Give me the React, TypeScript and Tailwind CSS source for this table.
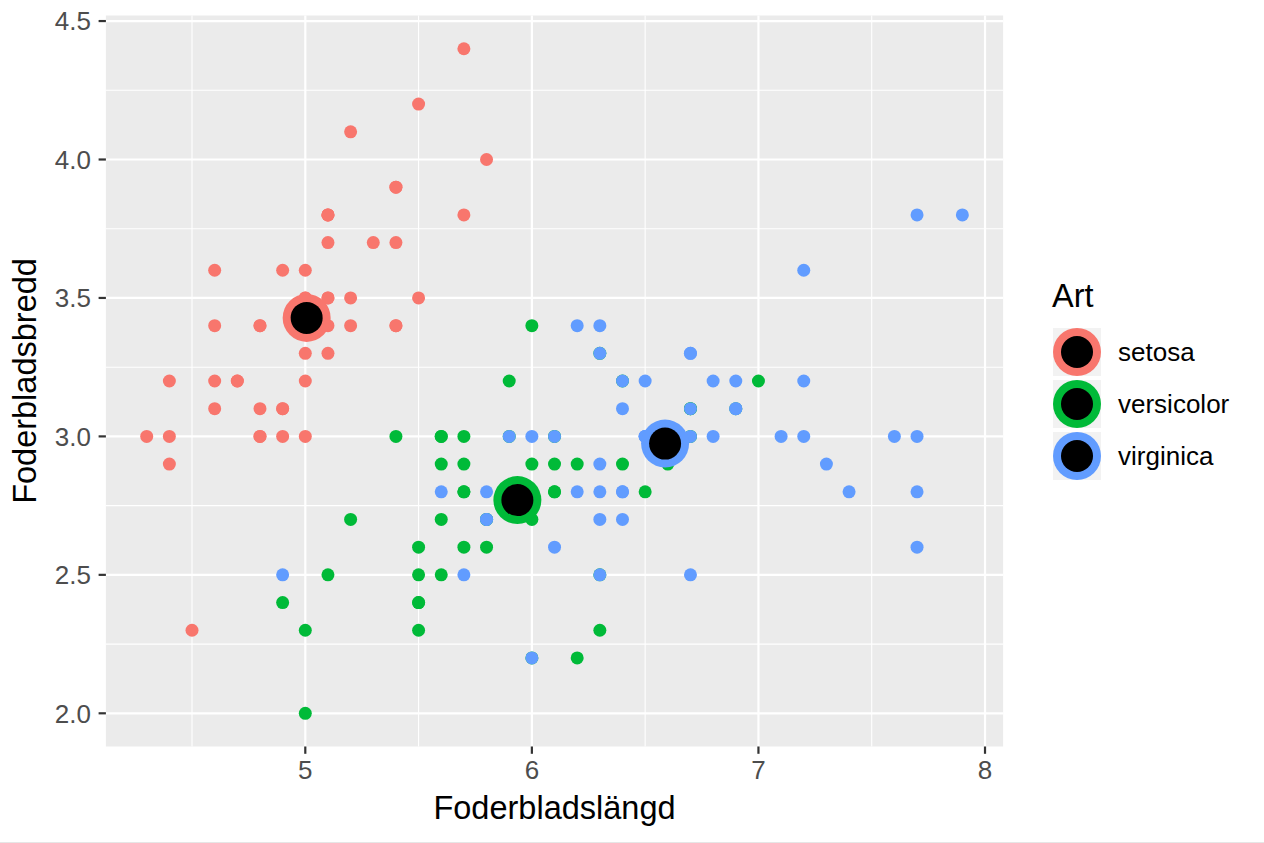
import React from "react";

const SETOSA =
  "5.1,3.5 4.9,3.0 4.7,3.2 4.6,3.1 5.0,3.6 5.4,3.9 4.6,3.4 5.0,3.4 4.4,2.9 4.9,3.1 5.4,3.7 4.8,3.4 4.8,3.0 4.3,3.0 5.8,4.0 5.7,4.4 5.4,3.9 5.1,3.5 5.7,3.8 5.1,3.8 5.4,3.4 5.1,3.7 4.6,3.6 5.1,3.3 4.8,3.4 5.0,3.0 5.0,3.4 5.2,3.5 5.2,3.4 4.7,3.2 4.8,3.1 5.4,3.4 5.2,4.1 5.5,4.2 4.9,3.1 5.0,3.2 5.5,3.5 4.9,3.6 4.4,3.0 5.1,3.4 5.0,3.5 4.5,2.3 4.4,3.2 5.0,3.5 5.1,3.8 4.8,3.0 5.1,3.8 4.6,3.2 5.3,3.7 5.0,3.3";
const VERSICOLOR =
  "7.0,3.2 6.4,3.2 6.9,3.1 5.5,2.3 6.5,2.8 5.7,2.8 6.3,3.3 4.9,2.4 6.6,2.9 5.2,2.7 5.0,2.0 5.9,3.0 6.0,2.2 6.1,2.9 5.6,2.9 6.7,3.1 5.6,3.0 5.8,2.7 6.2,2.2 5.6,2.5 5.9,3.2 6.1,2.8 6.3,2.5 6.1,2.8 6.4,2.9 6.6,3.0 6.7,3.0 6.0,2.9 5.7,2.6 5.5,2.4 5.5,2.4 5.8,2.7 6.0,2.7 5.4,3.0 6.0,3.4 6.7,3.1 6.3,2.3 5.6,3.0 5.5,2.5 5.5,2.6 6.1,3.0 5.8,2.6 5.0,2.3 5.6,2.7 5.7,3.0 5.7,2.9 6.2,2.9 5.1,2.5 5.7,2.8";
const VIRGINICA =
  "6.3,3.3 5.8,2.7 7.1,3.0 6.3,2.9 6.5,3.0 7.6,3.0 4.9,2.5 7.3,2.9 6.7,2.5 7.2,3.6 6.5,3.2 6.4,2.7 6.8,3.0 5.7,2.5 5.8,2.8 6.4,3.2 6.5,3.0 7.7,3.8 7.7,2.6 6.0,2.2 6.9,3.2 5.6,2.8 7.7,2.8 6.3,2.7 6.7,3.3 7.2,3.2 6.2,2.8 6.1,3.0 6.4,2.8 7.2,3.0 7.4,2.8 7.9,3.8 6.4,2.8 6.3,2.8 6.1,2.6 7.7,3.0 6.3,3.4 6.4,3.1 6.0,3.0 6.9,3.1 6.7,3.1 6.9,3.1 5.8,2.7 6.8,3.2 6.7,3.3 6.7,3.0 6.3,2.5 6.5,3.0 6.2,3.4 5.9,3.0";

const parse = (s: string) =>
  s.split(" ").map((p) => {
    const [a, b] = p.split(",").map(Number);
    return [a, b] as [number, number];
  });

const SPECIES = [
  { name: "setosa", color: "#F8766D", data: parse(SETOSA), mean: [5.006, 3.428] },
  { name: "versicolor", color: "#00BA38", data: parse(VERSICOLOR), mean: [5.936, 2.77] },
  { name: "virginica", color: "#619CFF", data: parse(VIRGINICA), mean: [6.588, 2.974] },
];

const X = (v: number) => 305.3 + (v - 5) * 226.57;
const Y = (v: number) => 713.3 - (v - 2) * 276.9;

const PX0 = 105.9;
const PX1 = 1003.1;
const PY0 = 15.5;
const PY1 = 746.5;

const FONT = '"Liberation Sans", Arial, Helvetica, sans-serif';

function Plot() {
  const xMajor = [5, 6, 7, 8];
  const xMinor = [4.5, 5.5, 6.5, 7.5];
  const yMajor = [2.0, 2.5, 3.0, 3.5, 4.0, 4.5];
  const yMinor = [2.25, 2.75, 3.25, 3.75, 4.25];
  return (
    <svg width={1030} height={843} className="shrink-0 block" style={{ fontFamily: FONT }}>
      <rect x={PX0} y={PY0} width={PX1 - PX0} height={PY1 - PY0} fill="#EBEBEB" />
      {xMinor.map((v) => (
        <line key={"xm" + v} x1={X(v)} x2={X(v)} y1={PY0} y2={PY1} stroke="#FFFFFF" strokeWidth={1.1} />
      ))}
      {yMinor.map((v) => (
        <line key={"ym" + v} x1={PX0} x2={PX1} y1={Y(v)} y2={Y(v)} stroke="#FFFFFF" strokeWidth={1.1} />
      ))}
      {xMajor.map((v) => (
        <line key={"xM" + v} x1={X(v)} x2={X(v)} y1={PY0} y2={PY1} stroke="#FFFFFF" strokeWidth={2.2} />
      ))}
      {yMajor.map((v) => (
        <line key={"yM" + v} x1={PX0} x2={PX1} y1={Y(v)} y2={Y(v)} stroke="#FFFFFF" strokeWidth={2.2} />
      ))}
      {SPECIES.map((s) =>
        s.data.map(([a, b], i) => (
          <circle key={s.name + i} cx={X(a)} cy={Y(b)} r={6.5} fill={s.color} />
        ))
      )}
      {SPECIES.map((s) => (
        <g key={"c" + s.name}>
          <circle cx={X(s.mean[0])} cy={Y(s.mean[1])} r={24} fill={s.color} />
          <circle cx={X(s.mean[0])} cy={Y(s.mean[1])} r={16} fill="#000000" />
        </g>
      ))}
      {yMajor.map((v) => (
        <g key={"yt" + v}>
          <line x1={PX0 - 7.3} x2={PX0} y1={Y(v)} y2={Y(v)} stroke="#333333" strokeWidth={2.2} />
          <text x={91} y={Y(v) + 9.3} textAnchor="end" fontSize={26} fill="#4D4D4D">
            {v.toFixed(1)}
          </text>
        </g>
      ))}
      {xMajor.map((v) => (
        <g key={"xt" + v}>
          <line x1={X(v)} x2={X(v)} y1={PY1} y2={PY1 + 7.3} stroke="#333333" strokeWidth={2.2} />
          <text x={X(v)} y={779} textAnchor="middle" fontSize={26} fill="#4D4D4D">
            {v}
          </text>
        </g>
      ))}
      <text x={(PX0 + PX1) / 2} y={819} textAnchor="middle" fontSize={32.5} fill="#000000">
        Foderbladslängd
      </text>
      <text
        x={0}
        y={0}
        transform={`translate(35.5, ${(PY0 + PY1) / 2}) rotate(-90)`}
        textAnchor="middle"
        fontSize={32.5}
        fill="#000000"
      >
        Foderbladsbredd
      </text>
    </svg>
  );
}

function Legend() {
  return (
    <div className="flex flex-col ml-[23px] mt-[277px]" style={{ fontFamily: FONT }}>
      <div className="text-[32.5px] leading-[38px] text-black mb-[13px] -ml-[1px]">Art</div>
      <div className="flex flex-col gap-[4px]">
        {SPECIES.map((s) => (
          <div key={s.name} className="flex items-center h-[48px]">
            <div className="w-[48px] h-[48px] bg-[#F2F2F2] flex items-center justify-center">
              <div
                className="w-[48px] h-[48px] rounded-full flex items-center justify-center"
                style={{ backgroundColor: s.color }}
              >
                <div className="w-[32px] h-[32px] rounded-full bg-black" />
              </div>
            </div>
            <div className="ml-[17px] text-[26px] text-black">{s.name}</div>
          </div>
        ))}
      </div>
    </div>
  );
}

export default function App() {
  return (
    <div className="w-[1264px] h-[843px] bg-white flex overflow-hidden border-b border-[#E6E6E6] box-border">
      <Plot />
      <Legend />
    </div>
  );
}
